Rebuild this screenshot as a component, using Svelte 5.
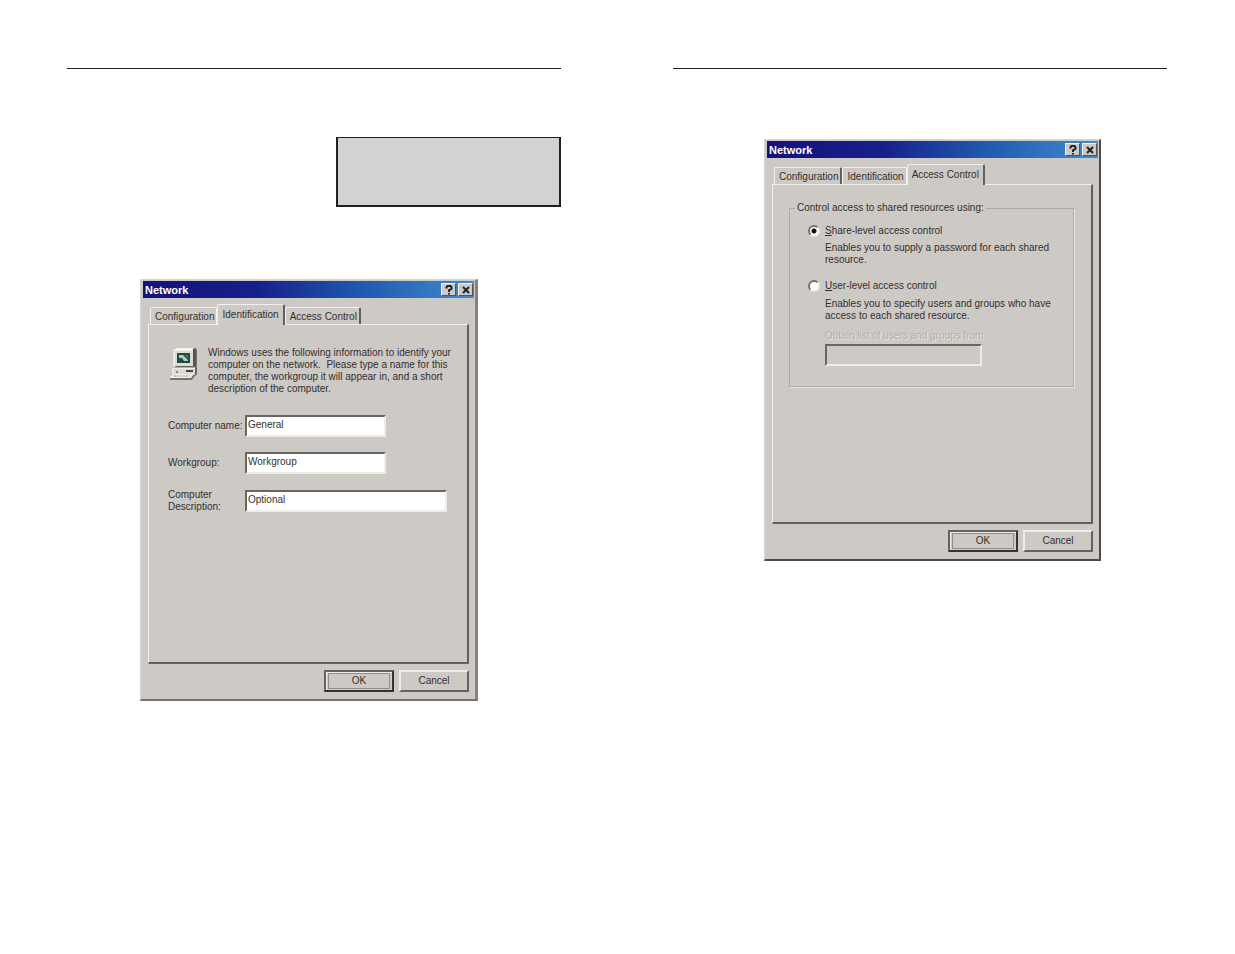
<script lang="ts">
  const tabs = ['Configuration', 'Identification', 'Access Control'];

  const fields = [
    { id: 'name', label: 'Computer name:', value: 'General', wide: false },
    { id: 'workgroup', label: 'Workgroup:', value: 'Workgroup', wide: false },
    { id: 'description', label: 'Computer Description:', value: 'Optional', wide: true }
  ];

  let active = $state({ left: 'Identification', right: 'Access Control' });
  let access = $state({ left: 'share', right: 'share' });
</script>

{#snippet identification(id)}
  <div class="intro">
    <svg class="computer" viewBox="0 0 28 34" aria-hidden="true">
      <path d="M6 3l3-2h17l2 2v17l-3 3H6z" fill="#77746d" />
      <path d="M5 3l3-2h17l-2 2z" fill="#f5f3e8" />
      <path d="M5 3h19v17H5z" fill="#dedbd0" />
      <path d="M24 3l3-2v17l-3 3z" fill="#55544e" />
      <path d="M5 3h19M5 3v16" stroke="#fffef5" fill="none" />
      <path d="M8 6h13v10H8z" fill="#234a49" />
      <path d="M10 8h4l5 5v1h-4l-2-3h-3z" fill="#a6d0b9" />
      <path d="M16 8h3v3z" fill="#52827c" />
      <path d="M4 21l3-2h19l2 2v6l-3 3H4z" fill="#66635d" />
      <path d="M4 21h22v7H4z" fill="#dedbd0" />
      <path d="M4 21h22M4 21v6" stroke="#fffef5" fill="none" />
      <path d="M17 24h7" stroke="#47443f" stroke-width="2" />
      <path d="M7 25h2" stroke="#6a9a60" stroke-width="2" />
      <path d="M1 30l4-3h20l-3 5H1z" fill="#f0eee5" />
      <path d="M1 31h21l3-4v3l-2 3H1z" fill="#77746d" />
      <path d="M5 29h16" stroke="#96938b" stroke-dasharray="2 1" />
    </svg>
    <p>
      Windows uses the following information to identify your<br />
      computer on the network.&nbsp; Please type a name for this<br />
      computer, the workgroup it will appear in, and a short<br />
      description of the computer.
    </p>
  </div>
  <div class="fields">
    {#each fields as field}
      <div class="field">
        <label for="{id}-{field.id}">{field.label}</label>
        <input class:wide={field.wide} id="{id}-{field.id}" type="text" value={field.value} />
      </div>
    {/each}
  </div>
{/snippet}

{#snippet accessControl(id)}
  <fieldset>
    <legend>Control access to shared resources using:</legend>
    <div class="choice">
      <input type="radio" id="{id}-share" name="{id}-access" value="share" bind:group={access[id]} />
      <label for="{id}-share"><u>S</u>hare-level access control</label>
    </div>
    <p class="hint">Enables you to supply a password for each shared<br />resource.</p>
    <div class="choice">
      <input type="radio" id="{id}-user" name="{id}-access" value="user" bind:group={access[id]} />
      <label for="{id}-user"><u>U</u>ser-level access control</label>
    </div>
    <p class="hint">Enables you to specify users and groups who have<br />access to each shared resource.</p>
    <div class="source" class:off={access[id] === 'share'}>
      <label for="{id}-source">Obtain list of users and groups from:</label>
      <input type="text" id="{id}-source" disabled={access[id] === 'share'} />
    </div>
  </fieldset>
{/snippet}

{#snippet dialog(id)}
  <section class="dialog" aria-label="Network">
    <header>
      <h2>Network</h2>
      <button class="caption" aria-label="Help">
        <svg viewBox="0 0 10 10"><path d="M2.5 3.5V2.2L3.5 1h3l1 1.2v1.6L5 5.3V7M5 8v1.5" /></svg>
      </button>
      <button class="caption" aria-label="Close">
        <svg viewBox="0 0 10 10"><path d="M2 2l6 6M8 2L2 8" /></svg>
      </button>
    </header>
    <div class="tabs" role="tablist">
      {#each tabs as tab}
        <button role="tab" aria-selected={active[id] === tab} onclick={() => (active[id] = tab)}>{tab}</button>
      {/each}
    </div>
    <div class="panel" role="tabpanel">
      {#if active[id] === 'Identification'}
        {@render identification(id)}
      {:else if active[id] === 'Access Control'}
        {@render accessControl(id)}
      {/if}
    </div>
    <footer>
      <button class="push default"><span>OK</span></button>
      <button class="push">Cancel</button>
    </footer>
  </section>
{/snippet}

<main>
  <article class="left">
    <div class="note"></div>
    {@render dialog('left')}
  </article>
  <article class="right">
    {@render dialog('right')}
  </article>
</main>

<style>
  :global(body) { margin: 0; background: #fff; }

  main {
    display: flex;
    gap: 112px;
    padding: 68px 68px 64px 67px;
    color: #33302e;
    font: 10px/12px "Liberation Sans", Arial, sans-serif;
  }

  article {
    flex: 1;
    min-width: 0;
    display: flex;
    flex-direction: column;
    border-top: 1px solid #231f20;
  }

  .left { padding-top: 68px; }
  .right { padding-top: 70px; }

  .note {
    align-self: flex-end;
    box-sizing: border-box;
    width: 225px;
    height: 70px;
    margin-bottom: 72px;
    border: 2px solid #231f20;
    border-top-width: 1px;
    background: #d2d2d2;
  }

  .dialog {
    box-sizing: border-box;
    width: 338px;
    margin-left: 73px;
    padding: 1px 1px 7px 2px;
    border: 1px solid #d8d5d1;
    border-right: 3px solid #85827f;
    border-bottom: 2px solid #73706e;
    background: #cdc9c5;
  }

  .right .dialog {
    width: 337px;
    margin-left: 91px;
    border-right: 2px solid #4e4b4a;
    border-bottom-color: #4e4b4a;
  }

  button, input { font: inherit; color: inherit; }

  header {
    display: flex;
    align-items: center;
    gap: 2px;
    height: 17px;
    padding: 0 1px 0 2px;
    background: linear-gradient(90deg, #15117a, #17208a 35%, #1f58ad 65%, #3f8bcd);
  }

  h2 {
    flex: 1;
    margin: 0;
    color: #fff;
    font-size: 11px;
    line-height: 16px;
  }

  .caption {
    display: flex;
    align-items: center;
    justify-content: center;
    box-sizing: border-box;
    width: 15px;
    height: 13px;
    padding: 0;
    border: 1px solid;
    border-color: #f4f2ef #55524f #55524f #f4f2ef;
    background: #cdc9c5;
  }

  .caption svg {
    width: 10px;
    height: 10px;
    fill: none;
    stroke: #222;
    stroke-width: 2;
  }

  .tabs {
    display: flex;
    align-items: flex-end;
    height: 20px;
    margin: 6px 0 0 7px;
  }

  .tabs button {
    height: 17px;
    padding: 0 2px 0 4px;
    border: 1px solid #f2f0ed;
    border-right: 2px solid #625f5c;
    border-bottom: 0;
    border-radius: 2px 2px 0 0;
    background: #cdc9c5;
    line-height: 15px;
  }

  .tabs button:has(+ [aria-selected="true"]) { border-right: 1px solid #f2f0ed; }

  .tabs [aria-selected="true"] {
    position: relative;
    z-index: 1;
    height: 21px;
    margin-bottom: -1px;
    padding: 0 4px 2px;
  }

  .panel {
    box-sizing: border-box;
    min-height: 340px;
    margin: 0 5px;
    padding: 22px 18px 18px 19px;
    border: 1px solid #f2f0ed;
    border-right: 2px solid #625f5c;
    border-bottom: 2px solid #625f5c;
  }

  p { margin: 0; }

  .intro {
    display: flex;
    gap: 10px;
    white-space: nowrap;
  }

  .computer {
    flex: none;
    width: 30px;
    height: 34px;
  }

  .fields {
    display: flex;
    flex-direction: column;
    gap: 15px;
    margin-top: 20px;
  }

  .field {
    display: flex;
    align-items: center;
  }

  .field label { width: 77px; }

  input[type="text"] {
    box-sizing: border-box;
    width: 141px;
    height: 22px;
    padding: 0 1px 3px;
    border: 2px solid;
    border-color: #696663 #eeece9 #eeece9 #696663;
    border-radius: 0;
    background: #fff;
  }

  input.wide { width: 202px; }

  fieldset {
    margin: -5px -1px 0 -3px;
    padding: 11px 18px 20px;
    border: 1px solid #aeaba7;
    box-shadow: 1px 1px #e6e3e0;
  }

  legend { margin-left: -13px; padding: 0 2px; }

  .choice {
    display: flex;
    align-items: center;
    gap: 5px;
  }

  input[type="radio"] {
    appearance: none;
    box-sizing: border-box;
    width: 12px;
    height: 12px;
    margin: 0;
    border: 2px solid;
    border-color: #73706d #eeece9 #eeece9 #73706d;
    border-radius: 50%;
    background: #fff;
  }

  input[type="radio"]:checked { background: radial-gradient(circle, #111 2px, #fff 3px); }

  .hint { margin: 5px 0 14px 17px; white-space: nowrap; }
  .hint + .choice + .hint { margin: 6px 0 8px 17px; }

  .source {
    display: flex;
    flex-direction: column;
    gap: 2px;
    margin-left: 17px;
  }

  .source input[type="text"] { width: 157px; }
  .off label { color: #b3afab; text-shadow: 1px 1px #e6e3e0; }
  .off input[type="text"] { background: #cdc9c5; }

  footer {
    display: flex;
    justify-content: flex-end;
    gap: 5px;
    padding: 6px 5px 0 0;
  }

  .push {
    box-sizing: border-box;
    width: 70px;
    height: 22px;
    padding: 0;
    border: 2px solid;
    border-color: #efedea #65625f #65625f #efedea;
    background: #cdc9c5;
  }

  .default {
    padding: 1px;
    border-color: #65625f #353231 #353231 #65625f;
    box-shadow: inset 1px 1px #efedea;
  }

  .default span {
    display: block;
    box-sizing: border-box;
    height: 16px;
    margin: 0 1px;
    border: 1px solid #918e8a;
    line-height: 14px;
  }
</style>
